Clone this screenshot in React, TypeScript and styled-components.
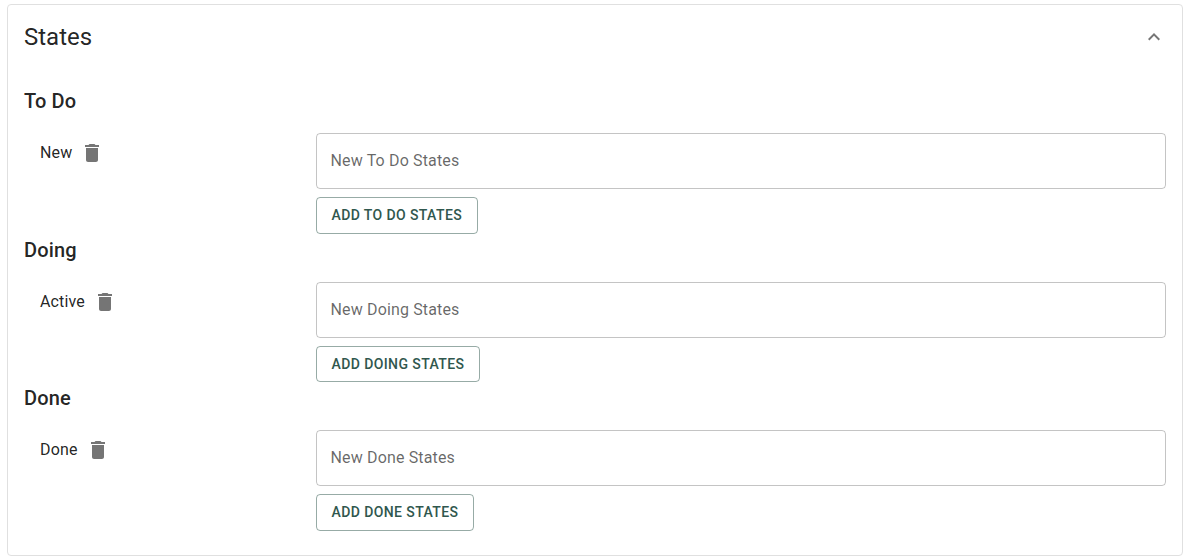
import React, { useState } from "react";
import styled, { createGlobalStyle } from "styled-components";

const GlobalStyle = createGlobalStyle`
  *, *::before, *::after { box-sizing: border-box; }
  body {
    margin: 0;
    background: #ffffff;
    color: rgba(0, 0, 0, 0.87);
    font-family: Roboto, "Liberation Sans", sans-serif;
    font-size: 16px;
  }
`;

const Page = styled.main`
  padding: 4px 3px 4px 7px;
`;

const Card = styled.section`
  border: 1px solid #e0e0e0;
  border-radius: 4px;
  background: #ffffff;
`;

const CardHeader = styled.header`
  display: flex;
  align-items: center;
  justify-content: space-between;
  padding: 16px;
`;

const CardTitle = styled.h2`
  margin: 0;
  font-size: 24px;
  font-weight: 400;
  line-height: 1.334;
`;

const CardBody = styled.div`
  padding: 16px 16px 24px;
`;

const GroupTitle = styled.h3`
  margin: 0 0 16px;
  font-size: 20px;
  font-weight: 500;
  line-height: 32px;
  letter-spacing: 0.0075em;
`;

const GroupGrid = styled.div`
  display: grid;
  grid-template-columns: repeat(12, 1fr);
  column-gap: 24px;
`;

const StateList = styled.ul`
  grid-column: span 3;
  margin: 0;
  padding: 0 0 0 16px;
  list-style: none;
`;

const StateItem = styled.li`
  display: flex;
  align-items: center;
  line-height: 24px;
  letter-spacing: 0.00938em;
`;

const IconButton = styled.button<{ $pad: number }>`
  display: inline-flex;
  padding: ${({ $pad }) => $pad}px;
  border: 0;
  border-radius: 50%;
  background: transparent;
  color: rgba(0, 0, 0, 0.54);
  cursor: pointer;
`;

const Icon = styled.svg`
  width: 24px;
  height: 24px;
  fill: currentColor;
`;

const AddForm = styled.form`
  grid-column: span 9;
  display: flex;
  flex-direction: column;
  align-items: flex-start;
  gap: 8px;
`;

const TextField = styled.input`
  width: 100%;
  height: 56px;
  padding: 0 14px 1px;
  border: 1px solid rgba(0, 0, 0, 0.23);
  border-radius: 4px;
  background: transparent;
  color: inherit;
  font: inherit;
  letter-spacing: 0.00938em;

  &::placeholder {
    color: rgba(0, 0, 0, 0.6);
    opacity: 1;
  }
`;

const AddButton = styled.button`
  padding: 5px 15px;
  border: 1px solid rgba(48, 87, 78, 0.5);
  border-radius: 4px;
  background: transparent;
  color: #30574e;
  font-family: inherit;
  font-size: 14px;
  font-weight: 500;
  line-height: 1.75;
  letter-spacing: 0.02857em;
  text-transform: uppercase;
  cursor: pointer;
`;

const DELETE_PATH =
  "M6 19c0 1.1.9 2 2 2h8c1.1 0 2-.9 2-2V7H6zM19 4h-3.5l-1-1h-5l-1 1H5v2h14z";
const EXPAND_LESS_PATH = "m12 8-6 6 1.41 1.41L12 10.83l4.59 4.58L18 14z";
const EXPAND_MORE_PATH = "M16.59 8.59 12 13.17 7.41 8.59 6 10l6 6 6-6z";

function StateGroup({ name, initial }: { name: string; initial: string[] }) {
  const [states, setStates] = useState(initial);
  const [draft, setDraft] = useState("");

  const add = (event: React.FormEvent) => {
    event.preventDefault();
    const value = draft.trim();
    if (value && !states.includes(value)) setStates([...states, value]);
    setDraft("");
  };

  return (
    <section>
      <GroupTitle>{name}</GroupTitle>
      <GroupGrid>
        <StateList>
          {states.map((state) => (
            <StateItem key={state}>
              {state}
              <IconButton
                type="button"
                $pad={8}
                aria-label={`Delete ${state}`}
                onClick={() => setStates(states.filter((s) => s !== state))}
              >
                <Icon viewBox="0 0 24 24" aria-hidden="true">
                  <path d={DELETE_PATH} />
                </Icon>
              </IconButton>
            </StateItem>
          ))}
        </StateList>
        <AddForm onSubmit={add}>
          <TextField
            type="text"
            aria-label={`New ${name} States`}
            placeholder={`New ${name} States`}
            value={draft}
            onChange={(e) => setDraft(e.target.value)}
          />
          <AddButton type="submit">Add {name} States</AddButton>
        </AddForm>
      </GroupGrid>
    </section>
  );
}

export default function App() {
  const [open, setOpen] = useState(true);

  return (
    <>
      <GlobalStyle />
      <Page>
        <Card>
          <CardHeader>
            <CardTitle>States</CardTitle>
            <IconButton
              type="button"
              $pad={0}
              aria-label="Toggle states"
              aria-expanded={open}
              onClick={() => setOpen(!open)}
            >
              <Icon viewBox="0 0 24 24" aria-hidden="true">
                <path d={open ? EXPAND_LESS_PATH : EXPAND_MORE_PATH} />
              </Icon>
            </IconButton>
          </CardHeader>
          {open && (
            <CardBody>
              <StateGroup name="To Do" initial={["New"]} />
              <StateGroup name="Doing" initial={["Active"]} />
              <StateGroup name="Done" initial={["Done"]} />
            </CardBody>
          )}
        </Card>
      </Page>
    </>
  );
}
